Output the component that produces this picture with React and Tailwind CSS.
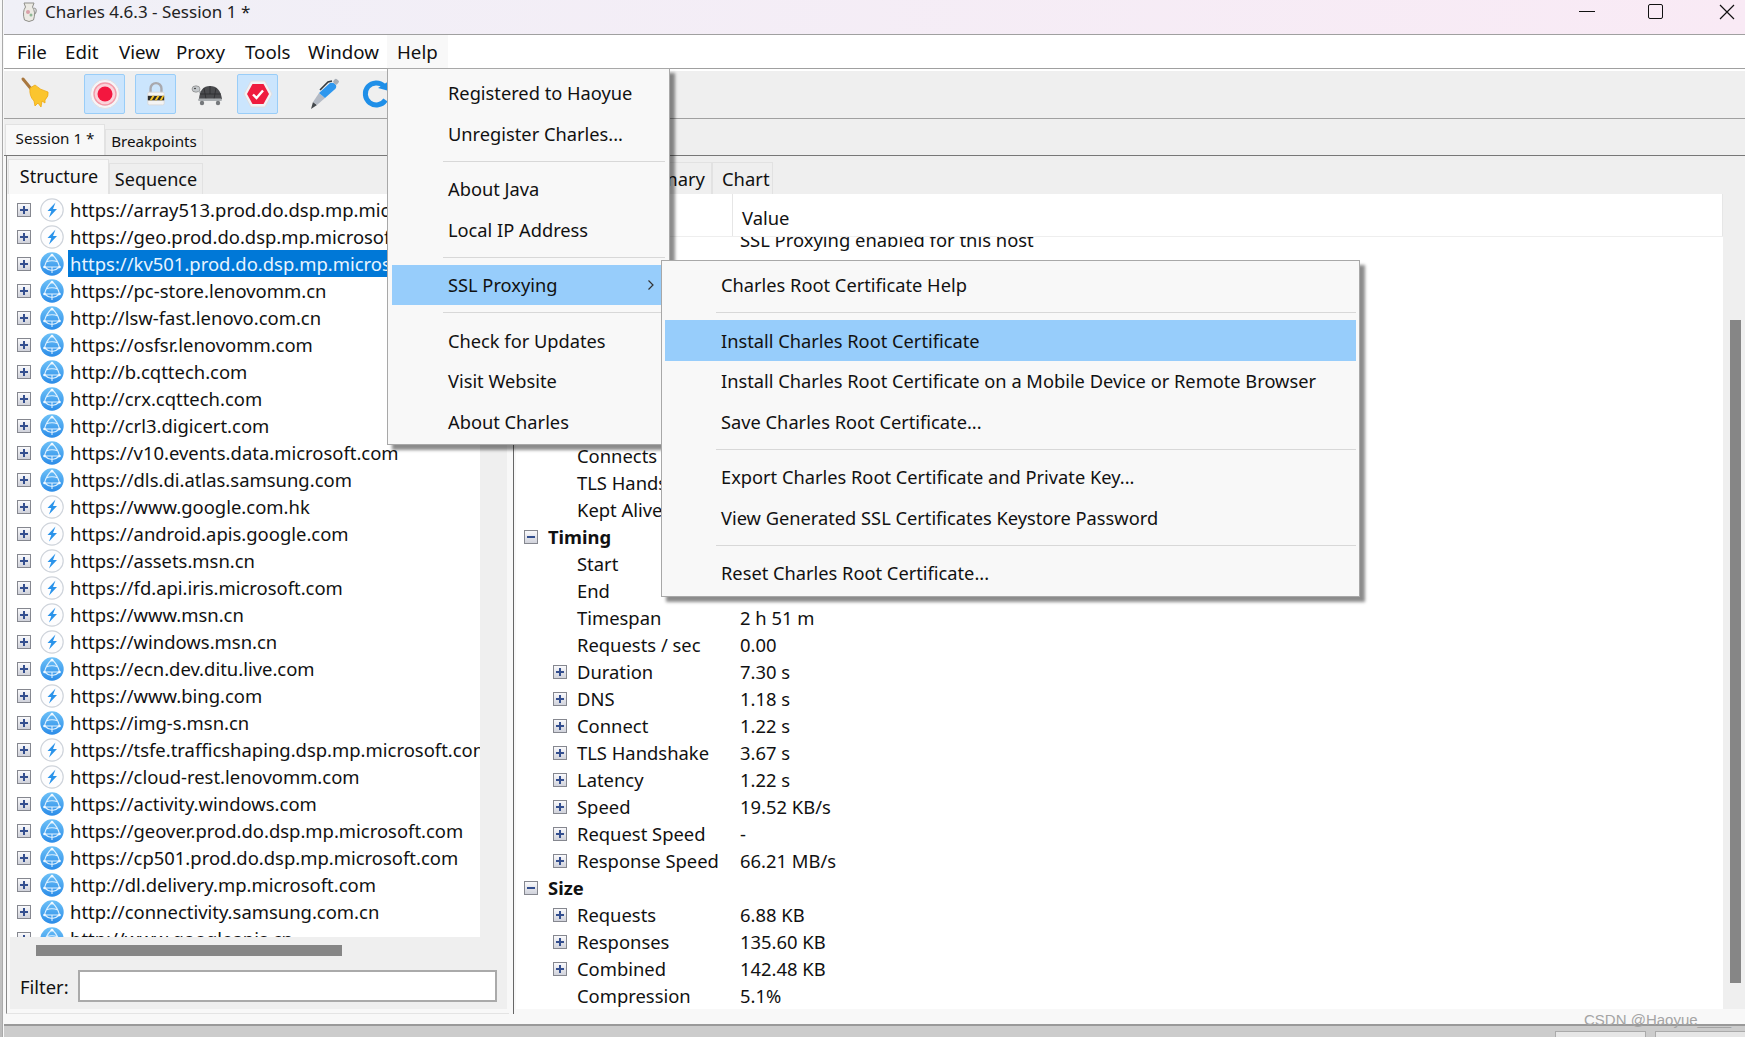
import React from "react";

const bolt = "bolt";
const globe = "globe";

const hosts = [
  ["https://array513.prod.do.dsp.mp.microsoft.com", bolt],
  ["https://geo.prod.do.dsp.mp.microsoft.com", bolt],
  ["https://kv501.prod.do.dsp.mp.microsoft.com", globe, true],
  ["https://pc-store.lenovomm.cn", globe],
  ["http://lsw-fast.lenovo.com.cn", globe],
  ["https://osfsr.lenovomm.com", globe],
  ["http://b.cqttech.com", globe],
  ["http://crx.cqttech.com", globe],
  ["http://crl3.digicert.com", globe],
  ["https://v10.events.data.microsoft.com", globe],
  ["https://dls.di.atlas.samsung.com", globe],
  ["https://www.google.com.hk", bolt],
  ["https://android.apis.google.com", bolt],
  ["https://assets.msn.cn", bolt],
  ["https://fd.api.iris.microsoft.com", bolt],
  ["https://www.msn.cn", bolt],
  ["https://windows.msn.cn", bolt],
  ["https://ecn.dev.ditu.live.com", globe],
  ["https://www.bing.com", bolt],
  ["https://img-s.msn.cn", globe],
  ["https://tsfe.trafficshaping.dsp.mp.microsoft.com", bolt],
  ["https://cloud-rest.lenovomm.com", bolt],
  ["https://activity.windows.com", globe],
  ["https://geover.prod.do.dsp.mp.microsoft.com", globe],
  ["https://cp501.prod.do.dsp.mp.microsoft.com", globe],
  ["http://dl.delivery.mp.microsoft.com", globe],
  ["http://connectivity.samsung.com.cn", globe],
  ["http://www.googleapis.cn", globe],
];

// rows of the overview table, most of them sit behind the menus
const overview = [
  { value: "SSL Proxying enabled for this host" },
  { value: "HTTP/1.1" },
  {},
  {},
  {},
  {},
  {},
  {},
  { label: "Connects" },
  { label: "TLS Handshakes" },
  { label: "Kept Alive" },
  { group: "Timing" },
  { label: "Start" },
  { label: "End" },
  { label: "Timespan", value: "2 h 51 m" },
  { label: "Requests / sec", value: "0.00" },
  { label: "Duration", value: "7.30 s", plus: true },
  { label: "DNS", value: "1.18 s", plus: true },
  { label: "Connect", value: "1.22 s", plus: true },
  { label: "TLS Handshake", value: "3.67 s", plus: true },
  { label: "Latency", value: "1.22 s", plus: true },
  { label: "Speed", value: "19.52 KB/s", plus: true },
  { label: "Request Speed", value: "-", plus: true },
  { label: "Response Speed", value: "66.21 MB/s", plus: true },
  { group: "Size" },
  { label: "Requests", value: "6.88 KB", plus: true },
  { label: "Responses", value: "135.60 KB", plus: true },
  { label: "Combined", value: "142.48 KB", plus: true },
  { label: "Compression", value: "5.1%" },
];

const helpMenu = [
  "Registered to Haoyue",
  "Unregister Charles...",
  null,
  "About Java",
  "Local IP Address",
  null,
  "SSL Proxying",
  null,
  "Check for Updates",
  "Visit Website",
  "About Charles",
];

const sslMenu = [
  "Charles Root Certificate Help",
  null,
  "Install Charles Root Certificate",
  "Install Charles Root Certificate on a Mobile Device or Remote Browser",
  "Save Charles Root Certificate...",
  null,
  "Export Charles Root Certificate and Private Key...",
  "View Generated SSL Certificates Keystore Password",
  null,
  "Reset Charles Root Certificate...",
];

function Expander({ open }) {
  return (
    <svg width="14" height="14" viewBox="0 0 14 14" className="shrink-0">
      <defs>
        <linearGradient id="expBg" x1="0" y1="0" x2="0" y2="1">
          <stop offset="0" stopColor="#fbfbfd" />
          <stop offset="1" stopColor="#cfd1da" />
        </linearGradient>
      </defs>
      <rect x="0.5" y="0.5" width="13" height="13" fill="url(#expBg)" stroke="#85878f" />
      <rect x="3" y="6" width="8" height="2" fill="#344f8f" />
      {!open && <rect x="6" y="3" width="2" height="8" fill="#344f8f" />}
    </svg>
  );
}

function GlobeIcon() {
  return (
    <svg width="24" height="24" viewBox="0 0 24 24" className="shrink-0">
      <defs>
        <linearGradient id="globeBg" x1="0" y1="0" x2="0" y2="1">
          <stop offset="0" stopColor="#6cc0f7" />
          <stop offset="1" stopColor="#2b8ce8" />
        </linearGradient>
      </defs>
      <circle cx="12" cy="12" r="11.7" fill="url(#globeBg)" />
      <path d="M12 2.5 Q6 8 4.5 15 Q12 22 19.5 15 Q18 8 12 2.5 Z M4.5 15 H19.5 M6 10 Q12 7.5 18 10 M12 15 V21" fill="none" stroke="#dff1ff" strokeWidth="1.1" />
      <circle cx="12" cy="3.2" r="1.4" fill="#f2f9ff" />
      <circle cx="4.5" cy="15" r="1.3" fill="#f2f9ff" />
      <circle cx="19.5" cy="15" r="1.3" fill="#f2f9ff" />
    </svg>
  );
}

function BoltIcon() {
  return (
    <svg width="24" height="24" viewBox="0 0 24 24" className="shrink-0">
      <circle cx="12" cy="12" r="11.2" fill="#fdfdfe" stroke="#cfd4db" strokeWidth="1.2" />
      <path d="M15.5 4.5 L7.5 13 H11.3 L9 19.5 L17 11 H13 Z" fill="#2a93ea" />
    </svg>
  );
}

function Broom() {
  return (
    <svg width="32" height="36" viewBox="0 0 32 36">
      <path d="M3 3 L12 14" stroke="#a9783f" strokeWidth="3" strokeLinecap="round" />
      <path d="M10 12 L15 9 Q20 14 28 16 Q29 20 25 24 L25 27 L22 25 L21 31 L18 27 L15 30 L14 25 Q9 20 10 12 Z" fill="#fbc52e" stroke="#eda912" strokeWidth="0.8" />
    </svg>
  );
}

function RecordIcon() {
  return (
    <svg width="30" height="30" viewBox="0 0 30 30">
      <circle cx="15" cy="15" r="14.5" fill="#f5f5f7" stroke="#dfdfe4" />
      <circle cx="15" cy="15" r="11" fill="#fbd3da" stroke="#f49aa8" strokeWidth="1.4" />
      <circle cx="15" cy="15" r="7.5" fill="#f3173f" />
    </svg>
  );
}

function LockIcon() {
  return (
    <svg width="20" height="26" viewBox="0 0 22 28">
      <path d="M5 13 V8 a6 6 0 0 1 12 0 V13" fill="none" stroke="#a9a9ae" strokeWidth="2.6" />
      <rect x="2" y="12" width="18" height="14" rx="1.5" fill="#f4f4f4" stroke="#d8d8d8" />
      <rect x="2" y="16" width="18" height="5" fill="#2c2c2c" />
      <path d="M4 21 L7 16 H9.5 L6.5 21 Z M9.5 21 L12.5 16 H15 L12 21 Z M15 21 L18 16 H20 L17.5 21 Z" fill="#f6c220" />
    </svg>
  );
}

function Turtle() {
  return (
    <svg width="32" height="26" viewBox="0 0 32 26">
      <ellipse cx="5" cy="8" rx="4" ry="3.2" fill="#c4c8cb" stroke="#777" strokeWidth="0.6" />
      <circle cx="4" cy="7.5" r="0.8" fill="#222" />
      <path d="M7 10 L10 15 L12 10 Z" fill="#b4b8bb" />
      <path d="M8 18 Q9 5 19 5 Q29 5 31 18 Z" fill="#4a4b4e" />
      <path d="M13 7 L15 18 M25 7 L23 18 M9 13 H30 M19 5 V13" stroke="#2c2c2e" strokeWidth="0.8" />
      <rect x="7" y="17.5" width="24" height="2.6" rx="1.3" fill="#a9adb0" />
      <circle cx="11" cy="22" r="2.2" fill="#75787b" />
      <circle cx="27" cy="22" r="2.2" fill="#75787b" />
    </svg>
  );
}

function StopIcon() {
  return (
    <svg width="30" height="28" viewBox="0 0 30 28">
      <path d="M8 1 H22 L29 14 L22 27 H8 L1 14 Z" fill="#f2f2f4" stroke="#dedee2" />
      <path d="M9.5 4 H20.5 L26 14 L20.5 24 H9.5 L4 14 Z" fill="#ef1c3e" />
      <path d="M10 14.5 L13.5 18 L20 10.5" fill="none" stroke="#fff" strokeWidth="2.4" />
    </svg>
  );
}

function Pen() {
  return (
    <svg width="32" height="32" viewBox="0 0 32 32">
      <path d="M2 31 L4 24 L8 27 Z" fill="#44484c" />
      <path d="M4 24 L10 15 L16 20 L8 27 Z" fill="#b4bac4" />
      <path d="M10 15 L21 5 Q25 4 27 7 Q28 10 25 12 L16 20 Z" fill="#2e97ee" />
      <path d="M11 12 L19 4 L23 3" fill="none" stroke="#33383c" strokeWidth="1.6" />
      <rect x="25" y="1" width="5" height="5" rx="1.5" transform="rotate(40 27 3)" fill="#a8aeb6" />
    </svg>
  );
}

function Repeat() {
  return (
    <svg width="30" height="30" viewBox="0 0 30 30">
      <path d="M24.5 21 A11 11 0 1 1 23 7" fill="none" stroke="#1f8fe8" strokeWidth="5" />
      <path d="M17 9 L28 12 L28 2 Z" fill="#1f8fe8" />
    </svg>
  );
}

function TitleIcon() {
  return (
    <svg width="20" height="24" viewBox="0 0 20 24">
      <path d="M5 3 H15 L13.5 7 Q17 12 14.5 20 Q10 23 5.5 20 Q3 12 6.5 7 Z" fill="#eceae4" stroke="#8f8f8a" />
      <path d="M15 8 Q19 9 16 14" fill="none" stroke="#9a9a96" strokeWidth="1.2" />
      <circle cx="9" cy="12" r="2" fill="#d9a0a8" />
      <circle cx="12" cy="15" r="1.5" fill="#8fb796" />
    </svg>
  );
}

function ToolButton({ active, children }) {
  return (
    <div
      className={
        "w-[41px] h-[40px] flex items-center justify-center rounded-[2px] " +
        (active ? "bg-[#cbe5fd] border border-[#99cdf8]" : "")
      }
    >
      {children}
    </div>
  );
}

function MenuList({ items, active, arrow }) {
  return items.map((item, i) =>
    item === null ? (
      <div key={i} className="h-[14.9px] flex items-center">
        <div className="h-[1px] w-full ml-[51px] bg-[#d8d8d8]" />
      </div>
    ) : (
      <div
        key={i}
        className={"h-[40.6px] flex items-center justify-between " + (item === active ? "bg-[#97cdfb]" : "")}
      >
        <span className="whitespace-nowrap pl-[56px]">{item}</span>
        {item === arrow && (
          <svg width="8" height="12" viewBox="0 0 8 12" className="mr-[10px]">
            <path d="M1.5 1.5 L6 6 L1.5 10.5" fill="none" stroke="#333" strokeWidth="1.2" />
          </svg>
        )}
      </div>
    )
  );
}

export default function App() {
  return (
    <div className="relative h-[1037px] w-[1745px] overflow-hidden pl-[3px] bg-gradient-to-b from-[#f8f8f8] via-[#f0f0f0] to-[#bbbbbb] font-['Noto_Sans',sans-serif] text-[#111] text-[18.4px]">
      <div className="flex flex-col h-full pl-[1px] bg-[#f8f8f8] border-l border-[#aaa] -ml-[1px]">
        {/* title bar */}
        <div className="h-[35px] shrink-0 flex items-start pl-[15px] border-b border-[#a0a0a0] bg-gradient-to-r from-[#f0f0f7] to-[#f9eaf5]">
          <TitleIcon />
          <span className="ml-[6px] text-[17px] leading-[24px] text-[#222]">Charles 4.6.3 - Session 1 *</span>
          <div className="ml-auto mt-[4px] h-[15px] flex items-center">
            <div className="w-[16px] h-[1px] bg-[#111]" />
            <div className="ml-[53px] w-[15px] h-[15px] rounded-[2px] border-[1.5px] border-[#111]" />
            <svg width="16" height="16" viewBox="0 0 16 16" className="ml-[56px] mr-[10px]">
              <path d="M1 1 L15 15 M15 1 L1 15" stroke="#111" strokeWidth="1.2" />
            </svg>
          </div>
        </div>

        {/* menu bar */}
        <div className="h-[34px] shrink-0 flex items-center bg-white border-b border-[#a0a0a0] pl-[13px] pt-[2px] text-[18.7px]">
          <span className="w-[48px]">File</span>
          <span className="w-[54px]">Edit</span>
          <span className="w-[57px]">View</span>
          <span className="w-[69px]">Proxy</span>
          <span className="w-[63px]">Tools</span>
          <span className="w-[89px]">Window</span>
          <span className="-ml-[10px] -mt-[2px] pt-[2px] h-[33px] px-[10px] flex items-center bg-[#f8f8f8]">Help</span>
        </div>

        {/* toolbar */}
        <div className="h-[50px] shrink-0 pt-[2px] bg-white">
          <div className="h-[48px] flex items-center gap-[10px] pl-[12px] pb-[1px] bg-[#efefef] border-b border-[#a0a0a0]">
            <div className="w-[40px] flex justify-center"><Broom /></div>
            <div className="ml-[18px] flex gap-[10px]">
              <ToolButton active><RecordIcon /></ToolButton>
              <ToolButton active><LockIcon /></ToolButton>
              <ToolButton><Turtle /></ToolButton>
              <ToolButton active><StopIcon /></ToolButton>
            </div>
            <div className="ml-[16px] flex gap-[10px]">
              <ToolButton><Pen /></ToolButton>
              <ToolButton><Repeat /></ToolButton>
            </div>
          </div>
        </div>

        {/* session tabs */}
        <div className="h-[37px] shrink-0 flex items-end bg-[#efefef] border-b border-[#777] pl-[1px] text-[15.2px]">
          <div className="h-[31px] w-[100px] pb-[4px] flex items-center justify-center bg-[#f8f8f8] border border-b-0 border-[#e2e2e2]">Session 1 *</div>
          <div className="h-[26px] w-[98px] pb-[2px] flex items-center justify-center border border-b-0 border-[#e2e2e2]">Breakpoints</div>
        </div>

        <div className="flex-1 min-h-0 flex">
          {/* left pane */}
          <div className="w-[505px] shrink-0 pl-[2px]">
            <div className="h-[858px] border-l border-[#888] border-b border-b-[#e4e4e4] pl-[3px] pr-[2px]">
              <div className="h-[853px] flex flex-col">
                <div className="h-[38px] shrink-0 flex items-end bg-[#efefef] -ml-[3px] pl-[1px] text-[18px]">
                  <div className="h-[35px] w-[101px] pl-[1px] pb-[2px] flex items-center justify-center bg-[#f8f8f8] border border-b-0 border-[#e2e2e2]">Structure</div>
                  <div className="h-[31px] w-[94px] flex items-center justify-center border border-b-0 border-[#e2e2e2]">Sequence</div>
                </div>
                <div className="flex-1 min-h-0 flex flex-col bg-[#efefef]">
                  <div className="h-[743px] w-[470px] shrink-0 bg-white overflow-hidden pt-[2px] text-[18.45px]">
                    {hosts.map(([url, icon, selected]) => (
                      <div key={url} className="h-[27px] flex items-center pl-[7px] whitespace-nowrap">
                        <Expander />
                        <div className="ml-[9px] w-[24px] shrink-0">
                          {icon === globe ? <GlobeIcon /> : <BoltIcon />}
                        </div>
                        <span className={"ml-[4px] h-[27px] flex items-center pl-[2px] pr-[3px] " + (selected ? "bg-[#0078d7] text-[#e8f4ff]" : "")}>{url}</span>
                      </div>
                    ))}
                  </div>
                  <div className="h-[33px] shrink-0 pt-[8px] pl-[26px]">
                    <div className="w-[306px] h-[11px] bg-[#868686]" />
                  </div>
                  <div className="flex items-center pl-[10px]">
                    <span className="w-[58px] pt-[2px]">Filter:</span>
                    <div className="w-[419px] h-[32px] bg-white border-[2px] border-[#aaa]" />
                  </div>
                </div>
              </div>
            </div>
          </div>

          {/* right pane */}
          <div className="flex-1 min-w-0 h-[858px] ml-[4px] border-l border-[#666] pl-[2px]">
            <div className="flex h-[853px]">
              <div className="flex-1 min-w-0 flex flex-col">
                <div className="h-[38px] shrink-0 flex items-end bg-[#efefef] pl-[98px] -ml-[2px]">
                  <div className="h-[32px] w-[100px] flex items-center justify-end pr-[6px] border border-b-0 border-[#e2e2e2]">Summary</div>
                  <div className="h-[32px] w-[61px] flex items-center pl-[9px] border border-b-0 border-[#e2e2e2]">Chart</div>
                </div>
                <div className="h-[43px] shrink-0 flex bg-white border-b border-[#eee]">
                  <div className="w-[217px] border-r border-[#e6e6e6]" />
                  <div className="flex-1 flex items-center pl-[9px] pt-[5px] border-r border-[#e6e6e6]">Value</div>
                </div>
                <div className="flex-1 min-h-0 overflow-hidden bg-white -mr-[3px]">
                  <div className="-mt-[11px]">
                    {overview.map((row, i) => (
                      <div key={i} className="h-[27px] flex items-center whitespace-nowrap">
                        {row.group ? (
                          <div className="flex items-center pl-[8px]">
                            <Expander open />
                            <span className="ml-[10px] font-bold">{row.group}</span>
                          </div>
                        ) : (
                          <>
                            <div className="w-[61px] shrink-0 flex justify-end pr-[10px]">
                              {row.plus && <Expander />}
                            </div>
                            <span className="w-[163px] shrink-0">{row.label}</span>
                            <span>{row.value}</span>
                          </>
                        )}
                      </div>
                    ))}
                  </div>
                </div>
              </div>
              <div className="w-[22px] shrink-0 bg-[#efefef] pl-[7px] flex flex-col">
                <div className="h-[163px] shrink-0" />
                <div className="w-[11px] h-[663px] bg-[#868686] mt-[1px]" />
              </div>
            </div>
          </div>
        </div>

        {/* status bar */}
        <div className="h-[13px] shrink-0 bg-[#cccccc] border-t-2 border-[#999] flex justify-end items-end gap-[9px]">
          <div className="w-[91px] h-[6px] bg-[#e6e6e6] border border-b-0 border-[#aaa]" />
          <div className="w-[90px] h-[6px] bg-[#e6e6e6] border border-b-0 border-r-0 border-[#aaa]" />
        </div>
      </div>

      {/* Help menu, open */}
      <div className="absolute left-[387px] top-[68px] w-[283px] h-[377px] bg-[#f8f8f8] border border-[#a8a8a8] px-[4px] pt-[3.5px] text-[18.25px] shadow-[5px_5px_3px_rgba(0,0,0,0.45)]">
        <MenuList items={helpMenu} active="SSL Proxying" arrow="SSL Proxying" />
      </div>

      {/* SSL Proxying submenu */}
      <div className="absolute left-[661px] top-[260px] w-[699px] h-[337px] bg-[#f8f8f8] border border-[#a8a8a8] px-[3px] pt-[3.5px] text-[18.25px] shadow-[5px_5px_3px_rgba(0,0,0,0.45)]">
        <MenuList items={sslMenu} active="Install Charles Root Certificate" />
      </div>

      {/* watermark */}
      <span className="absolute left-[1584px] top-[1009px] font-['Liberation_Sans',sans-serif] text-[15px] text-[#a4a4a4]">CSDN @Haoyue____</span>
    </div>
  );
}
